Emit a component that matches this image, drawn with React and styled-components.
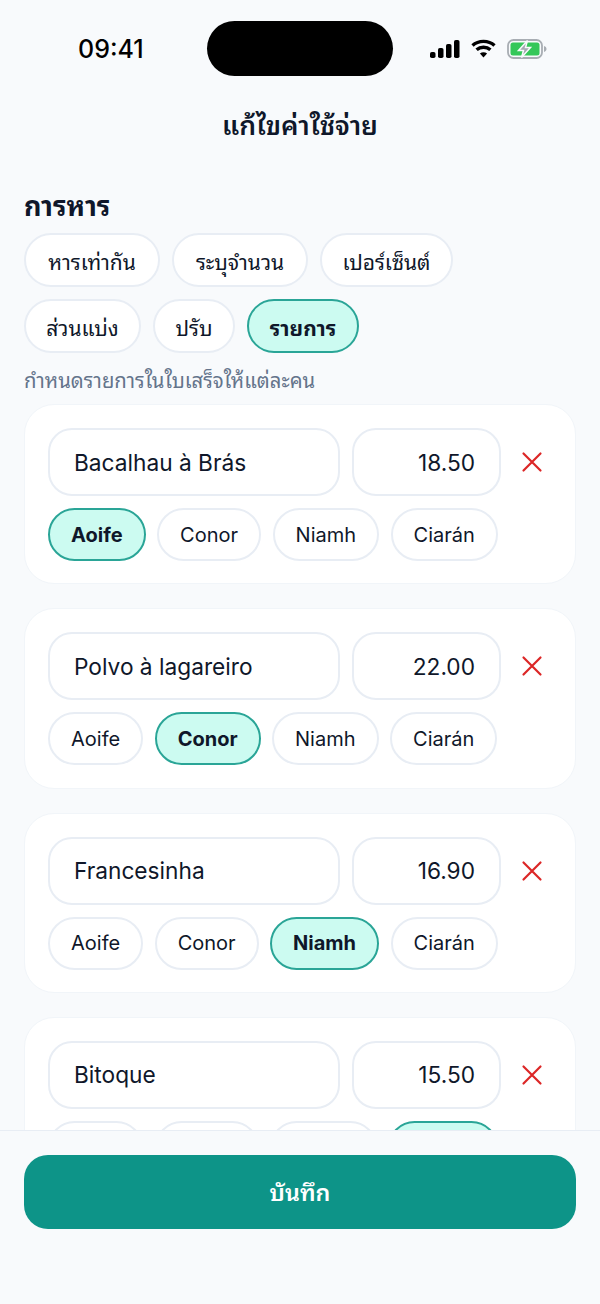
import React from 'react'
import styled, { createGlobalStyle } from 'styled-components'

const GlobalStyle = createGlobalStyle`
  html, body {
    margin: 0;
    padding: 0;
    background: #f8fafc;
  }
  * {
    box-sizing: border-box;
  }
`

const Screen = styled.div`
  width: 600px;
  height: 1304px;
  display: flex;
  flex-direction: column;
  overflow: hidden;
  background: #f8fafc;
  color: #0f172a;
  font-family: Inter, "Noto Sans Thai Looped", Loma, Garuda, Waree, "Noto Sans", sans-serif;
`

const StatusBar = styled.div`
  height: 97px;
  flex-shrink: 0;
  padding-top: 21px;
  display: grid;
  grid-template-columns: 207px 186px 207px;
`

const Time = styled.div`
  height: 55px;
  padding-left: 78px;
  display: flex;
  align-items: center;
  font-size: 25px;
  font-weight: 500;
  color: #000;
`

const Island = styled.div`
  height: 55px;
  border-radius: 28px;
  background: #000;
`

const StatusIcons = styled.div`
  height: 55px;
  padding-left: 37px;
  display: flex;
  align-items: center;
  gap: 11px;
`

const Title = styled.h1`
  margin: 0;
  height: 58px;
  padding-bottom: 6px;
  flex-shrink: 0;
  display: flex;
  align-items: center;
  justify-content: center;
  font-size: 26.5px;
  font-weight: 600;
`

const Content = styled.main`
  flex: 1;
  min-height: 0;
  overflow: hidden;
  padding: 35px 24px 0;
`

const SectionLabel = styled.h2`
  margin: 0 0 9px;
  height: 34px;
  padding-bottom: 8px;
  display: flex;
  align-items: center;
  font-size: 27px;
  font-weight: 700;
`

const ChipRow = styled.div`
  display: flex;
  flex-wrap: wrap;
  gap: 11.5px;
`

const ModeChips = styled(ChipRow)`
  width: 450px;
  gap: 12px;
`

const Chip = styled.button`
  height: 53px;
  padding: 0 21px;
  border-radius: 28px;
  border: 2px solid ${(p) => (p.$active ? '#2aa597' : '#e8edf4')};
  background: ${(p) => (p.$active ? '#ccfbf1' : '#fff')};
  color: #0f172a;
  font-family: inherit;
  font-size: 20px;
  font-weight: ${(p) => (p.$active ? 700 : 400)};
  white-space: nowrap;
`

const ModeChip = styled(Chip)`
  width: ${(p) => p.$w}px;
  height: 54px;
  padding: 0;
  font-size: 21px;
`

const Hint = styled.p`
  margin: 12px 0 7px;
  height: 32px;
  padding-bottom: 4px;
  display: flex;
  align-items: center;
  font-size: 20.3px;
  color: #64748b;
`

const ItemList = styled.div`
  display: flex;
  flex-direction: column;
  gap: 24px;
`

const Card = styled.section`
  height: 180.3px;
  flex-shrink: 0;
  padding: 23px 23px 0;
  border-radius: 30px;
  border: 1px solid #f1f5f9;
  background: #fff;
`

const FieldRow = styled.div`
  display: grid;
  grid-template-columns: 292px 149px 38px;
  gap: 12px;
  align-items: center;
  margin-bottom: 12px;
`

const Field = styled.input`
  width: 100%;
  height: 68px;
  padding: 0 24px;
  border-radius: 24px;
  border: 2px solid #e8edf4;
  background: #fff;
  color: #0f172a;
  font-family: inherit;
  font-size: 22.7px;
  outline: none;
  text-align: ${(p) => (p.$right ? 'right' : 'left')};
`

const RemoveButton = styled.button`
  width: 38px;
  height: 40px;
  padding: 0;
  border: 0;
  background: none;
  display: flex;
  align-items: center;
  justify-content: center;
`

const Footer = styled.footer`
  height: 174px;
  flex-shrink: 0;
  padding: 24px 24px 0;
  border-top: 1px solid #e8edf4;
  background: #f8fafc;
`

const SaveButton = styled.button`
  width: 100%;
  height: 74px;
  padding: 0 0 3px;
  border: 0;
  border-radius: 24px;
  background: #0d9488;
  color: #fff;
  font-family: inherit;
  font-size: 23.3px;
  font-weight: 600;
`

const SignalIcon = () => (
  <svg width="30" height="18" viewBox="0 0 30 18" fill="#000">
    <rect x="0" y="12" width="5.5" height="6" rx="1.8" />
    <rect x="8" y="8" width="5.5" height="10" rx="1.8" />
    <rect x="16" y="4" width="5.5" height="14" rx="1.8" />
    <rect x="24" y="0" width="5.5" height="18" rx="1.8" />
  </svg>
)

const WifiIcon = () => (
  <svg width="25" height="19" viewBox="0 0 25 19" fill="none" stroke="#000" strokeWidth="3.4">
    <path d="M1.5 6.5C7.5 1 17.5 1 23.5 6.5" />
    <path d="M5.6 10.8C9.5 7.3 15.5 7.3 19.4 10.8" />
    <path d="M12.5 18.4L8.9 14.6C11 12.9 14 12.9 16.1 14.6Z" fill="#000" stroke="none" />
  </svg>
)

const BatteryIcon = () => (
  <svg width="40" height="20" viewBox="0 0 40 20">
    <rect x="1" y="1" width="34" height="18" rx="5.5" fill="none" stroke="#a8adb3" strokeWidth="1.8" />
    <rect x="3.5" y="3.5" width="29" height="13" rx="2.5" fill="#34c759" />
    <path d="M37 7v6c1.5-.4 2.5-1.6 2.5-3S38.5 7.4 37 7Z" fill="#a8adb3" />
    <path d="M20.5 1.5L11.5 11.5h5L14.5 18.5l9-10h-5Z" fill="#a3a8b0" stroke="#f8fafc" strokeWidth="1.5" />
  </svg>
)

const CloseIcon = () => (
  <svg width="24" height="24" viewBox="0 0 24 24" fill="none" stroke="#dc2626" strokeWidth="2.2" strokeLinecap="round">
    <path d="M3.5 3.5L20.5 20.5M20.5 3.5L3.5 20.5" />
  </svg>
)

const modes = [
  { label: 'หารเท่ากัน', width: 136 },
  { label: 'ระบุจำนวน', width: 136 },
  { label: 'เปอร์เซ็นต์', width: 133 },
  { label: 'ส่วนแบ่ง', width: 117 },
  { label: 'ปรับ', width: 82 },
  { label: 'รายการ', width: 112, active: true },
]

const people = ['Aoife', 'Conor', 'Niamh', 'Ciarán']

const items = [
  { name: 'Bacalhau à Brás', price: '18.50', owner: 'Aoife' },
  { name: 'Polvo à lagareiro', price: '22.00', owner: 'Conor' },
  { name: 'Francesinha', price: '16.90', owner: 'Niamh' },
  { name: 'Bitoque', price: '15.50', owner: 'Ciarán' },
]

export default function App() {
  return (
    <Screen>
      <GlobalStyle />
      <StatusBar>
        <Time>09:41</Time>
        <Island />
        <StatusIcons>
          <SignalIcon />
          <WifiIcon />
          <BatteryIcon />
        </StatusIcons>
      </StatusBar>
      <Title>แก้ไขค่าใช้จ่าย</Title>
      <Content>
        <SectionLabel>การหาร</SectionLabel>
        <ModeChips>
          {modes.map((m) => (
            <ModeChip key={m.label} $w={m.width} $active={m.active}>
              {m.label}
            </ModeChip>
          ))}
        </ModeChips>
        <Hint>กำหนดรายการในใบเสร็จให้แต่ละคน</Hint>
        <ItemList>
          {items.map((item) => (
            <Card key={item.name}>
              <FieldRow>
                <Field readOnly value={item.name} />
                <Field readOnly $right value={item.price} />
                <RemoveButton aria-label="remove">
                  <CloseIcon />
                </RemoveButton>
              </FieldRow>
              <ChipRow>
                {people.map((name) => (
                  <Chip key={name} $active={name === item.owner}>
                    {name}
                  </Chip>
                ))}
              </ChipRow>
            </Card>
          ))}
        </ItemList>
      </Content>
      <Footer>
        <SaveButton>บันทึก</SaveButton>
      </Footer>
    </Screen>
  )
}
